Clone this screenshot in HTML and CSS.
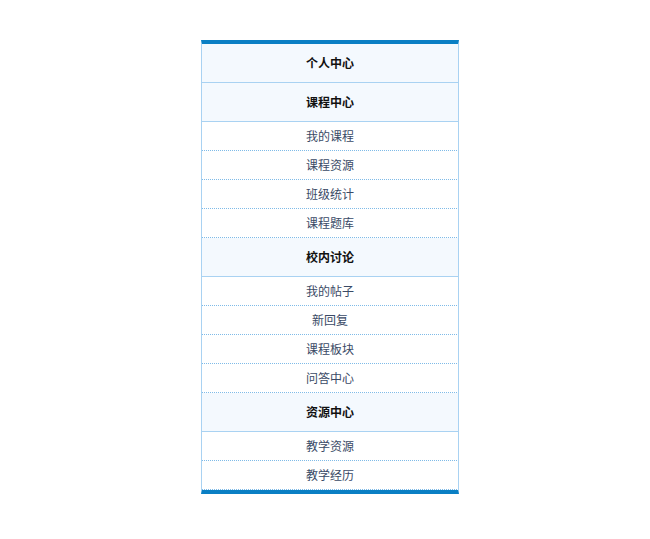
FILE: index.html
```html
<!DOCTYPE html>
<html lang="zh">
<head>
<meta charset="utf-8">
<title>菜单</title>
<link rel="stylesheet" href="styles.css">
</head>
<body>
<div class="menu">
  <div class="head">个人中心</div>
  <div class="head">课程中心</div>
  <div class="item">我的课程</div>
  <div class="item">课程资源</div>
  <div class="item">班级统计</div>
  <div class="item">课程题库</div>
  <div class="head">校内讨论</div>
  <div class="item">我的帖子</div>
  <div class="item">新回复</div>
  <div class="item">课程板块</div>
  <div class="item">问答中心</div>
  <div class="head">资源中心</div>
  <div class="item">教学资源</div>
  <div class="item">教学经历</div>
</div>
</body>
</html>
```

FILE: styles.css
```css
html, body {
  margin: 0;
  padding: 0;
  background: #fff;
}
body {
  font-family: "Noto Sans CJK SC", "Noto Sans", sans-serif;
  font-size: 12px;
}
.menu {
  width: 256px;
  margin: 40px 0 0 201px;
  border-top: 4px solid #0a7fc4;
  border-bottom: 4px solid #0a7fc4;
  border-left: 1px solid #a9d2f2;
  border-right: 1px solid #a9d2f2;
  display: flex;
  flex-direction: column;
}
.head {
  height: 38px;
  line-height: 38px;
  text-align: center;
  font-weight: bold;
  color: #111;
  background: #f4f9fe;
  border-bottom: 1px solid #a9d2f2;
}
.item {
  height: 28px;
  padding-bottom: 1px;
  line-height: 28px;
  text-align: center;
  color: #3a4a66;
  background-color: #fff;
  background-image: linear-gradient(to right, #7fbbe8 50%, transparent 50%);
  background-size: 2px 1px;
  background-repeat: repeat-x;
  background-position: left bottom;
}
```
